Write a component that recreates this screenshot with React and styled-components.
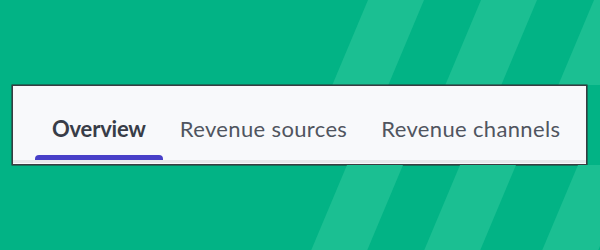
import React from "react";
import styled, { createGlobalStyle } from "styled-components";

const GlobalStyle = createGlobalStyle`
  html, body {
    margin: 0;
    padding: 0;
  }
  body {
    font-family: "Lato", "Open Sans", sans-serif;
    background: #02b385;
  }
`;

const Page = styled.div`
  width: 600px;
  height: 250px;
  display: flex;
  flex-direction: column;
  background: #02b385;
  overflow: hidden;
`;

const Band = styled.div`
  height: ${(p) => p.h}px;
  flex-shrink: 0;
  svg {
    display: block;
  }
`;

const CardRow = styled.div`
  padding: 0 13px 0 12px;
`;

const Card = styled.div`
  background: #f8f9fb;
  border: 1.5px solid #3a3d42;
  box-shadow: 0 0 0 0.5px #2a2d30;
  height: 80px;
  box-sizing: border-box;
  display: flex;
  flex-direction: column;
  justify-content: flex-end;
  padding-bottom: 1px;
`;

const TabList = styled.div`
  display: flex;
  padding-left: 22px;
  border-bottom: 3px solid #e7e8ec;
`;

const Tab = styled.div`
  position: relative;
  padding: 0 17px 18px;
  font-size: 22px;
  line-height: 26px;
  font-weight: ${(p) => (p.active ? 700 : 400)};
  letter-spacing: ${(p) => (p.active ? "-0.2px" : "0.35px")};
  color: ${(p) => (p.active ? "#383d48" : "#50555f")};
  white-space: nowrap;
  cursor: pointer;
  &::after {
    content: "";
    position: absolute;
    left: 0;
    right: 0;
    bottom: 0;
    height: 5px;
    border-radius: 4px 4px 0 0;
    background: ${(p) => (p.active ? "#4840c8" : "transparent")};
  }
`;

const STRIPE = "#1bbf92";

function Stripes({ height, tops }) {
  const shift = 0.42 * height;
  return (
    <svg width="600" height={height} viewBox={`0 0 600 ${height}`}>
      {tops.map((x) => (
        <polygon
          key={x}
          points={`${x},0 ${x + 56},0 ${x + 56 - shift},${height} ${x - shift},${height}`}
          fill={STRIPE}
        />
      ))}
    </svg>
  );
}

const tabs = ["Overview", "Revenue sources", "Revenue channels"];

export default function App() {
  return (
    <>
      <GlobalStyle />
      <Page>
        <Band h={85}>
          <Stripes height={85} tops={[368, 481, 594]} />
        </Band>
        <CardRow>
          <Card>
            <TabList>
              {tabs.map((t, i) => (
                <Tab key={t} active={i === 0}>
                  {t}
                </Tab>
              ))}
            </TabList>
          </Card>
        </CardRow>
        <Band h={85}>
          <Stripes height={85} tops={[347, 460, 578]} />
        </Band>
      </Page>
    </>
  );
}
